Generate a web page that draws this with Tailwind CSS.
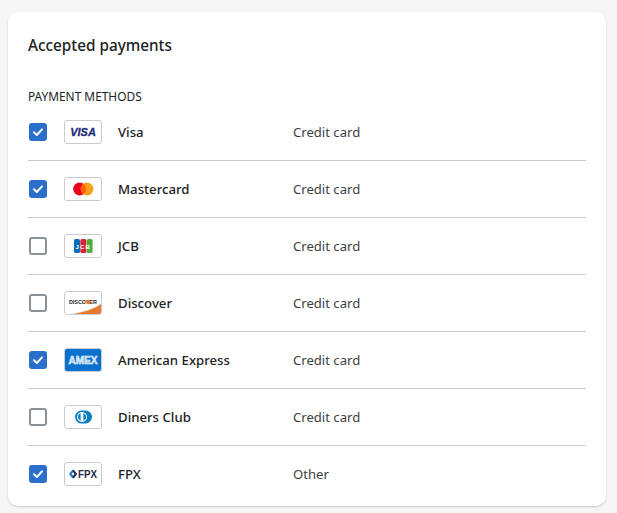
<!DOCTYPE html>
<html lang="en">
<head>
  <meta charset="UTF-8" />
  <title>Accepted payments</title>
  <script src="https://cdn.jsdelivr.net/npm/@tailwindcss/browser@4"></script>
</head>
<body class="h-[513px] overflow-hidden bg-[#f6f6f7] px-[8px] pt-[12px] font-['Noto_Sans','Open_Sans',sans-serif] text-[#202223]">

  <div class="w-[598px] h-[494px] rounded-[10px] bg-white px-[20px] shadow-[0_1px_2px_rgba(0,0,0,0.18)]">
    <h2 class="pt-[21px] h-[68px] text-[15.3px] leading-[24px] font-medium">Accepted payments</h2>
    <p class="mt-[8px] h-[16px] text-[11.9px] leading-[16px]">PAYMENT METHODS</p>

    <div class="w-[558px]">
      <!-- Visa -->
      <div class="flex items-center h-[56px] border-b border-[#c9cccf] box-content">
        <span class="ml-[1px] w-[18px] h-[18px] rounded-[3px] bg-[#2c6ecb] flex items-center justify-center">
          <svg width="12" height="12" viewBox="0 0 12 12" fill="none"><path d="M2 6.3 4.8 9 10 3.4" stroke="#fff" stroke-width="2" stroke-linecap="round" stroke-linejoin="round"/></svg>
        </span>
        <span class="ml-[17px] w-[38px] h-[24px] rounded-[3px] border border-[#c9cccf] bg-white flex items-center justify-center">
          <svg width="36" height="22" viewBox="0 0 36 22"><text x="18" y="15" text-anchor="middle" font-family="Liberation Sans" font-size="11" font-weight="700" font-style="italic" fill="#1e2a7b" stroke="#1e2a7b" stroke-width="0.3">VISA</text></svg>
        </span>
        <span class="ml-[16px] w-[175px] pt-[1px] text-[13.2px] font-medium">Visa</span>
        <span class="pt-[1px] text-[13.1px] text-[#3d4043]">Credit card</span>
      </div>

      <!-- Mastercard -->
      <div class="flex items-center h-[56px] border-b border-[#c9cccf] box-content">
        <span class="ml-[1px] w-[18px] h-[18px] rounded-[3px] bg-[#2c6ecb] flex items-center justify-center">
          <svg width="12" height="12" viewBox="0 0 12 12" fill="none"><path d="M2 6.3 4.8 9 10 3.4" stroke="#fff" stroke-width="2" stroke-linecap="round" stroke-linejoin="round"/></svg>
        </span>
        <span class="ml-[17px] w-[38px] h-[24px] rounded-[3px] border border-[#c9cccf] bg-white flex items-center justify-center">
          <svg width="36" height="22" viewBox="0 0 36 22"><circle cx="14.6" cy="11" r="6.4" fill="#eb001b"/><circle cx="22" cy="11" r="6.4" fill="#f79e1b"/><path d="M18.3 5.8a6.4 6.4 0 0 1 0 10.4 6.4 6.4 0 0 1 0-10.4z" fill="#ff5f00"/></svg>
        </span>
        <span class="ml-[16px] w-[175px] pt-[1px] text-[13.2px] font-medium">Mastercard</span>
        <span class="pt-[1px] text-[13.1px] text-[#3d4043]">Credit card</span>
      </div>

      <!-- JCB -->
      <div class="flex items-center h-[56px] border-b border-[#c9cccf] box-content">
        <span class="ml-[1px] w-[18px] h-[18px] rounded-[3px] border-2 border-[#8c9196] bg-white"></span>
        <span class="ml-[17px] w-[38px] h-[24px] rounded-[3px] border border-[#c9cccf] bg-white flex items-center justify-center">
          <svg width="36" height="22" viewBox="0 0 36 22">
            <rect x="9" y="4" width="6" height="14" rx="1.5" fill="#0b6cb8"/>
            <rect x="15.3" y="4" width="6" height="14" rx="1.5" fill="#d8213b"/>
            <rect x="21.6" y="4" width="6" height="14" rx="1.5" fill="#4caf3a"/>
            <text x="18.3" y="13.5" text-anchor="middle" font-family="Liberation Sans" font-size="6" font-weight="700" fill="#fff" letter-spacing="1.2">JCB</text>
          </svg>
        </span>
        <span class="ml-[16px] w-[175px] pt-[1px] text-[13.2px] font-medium">JCB</span>
        <span class="pt-[1px] text-[13.1px] text-[#3d4043]">Credit card</span>
      </div>

      <!-- Discover -->
      <div class="flex items-center h-[56px] border-b border-[#c9cccf] box-content">
        <span class="ml-[1px] w-[18px] h-[18px] rounded-[3px] border-2 border-[#8c9196] bg-white"></span>
        <span class="ml-[17px] w-[38px] h-[24px] rounded-[3px] border border-[#c9cccf] bg-white overflow-hidden flex">
          <svg width="36" height="22" viewBox="0 0 36 22">
            <path d="M8 22C19 20 29 17 36 12v10z" fill="#e9792f"/>
            <text x="4" y="12" font-family="Liberation Sans" font-size="6" font-weight="700" fill="#231f20" textLength="28" lengthAdjust="spacingAndGlyphs">DISCOVER</text>
            <circle cx="23.5" cy="10" r="2.2" fill="#e9792f"/>
          </svg>
        </span>
        <span class="ml-[16px] w-[175px] pt-[1px] text-[13.2px] font-medium">Discover</span>
        <span class="pt-[1px] text-[13.1px] text-[#3d4043]">Credit card</span>
      </div>

      <!-- American Express -->
      <div class="flex items-center h-[56px] border-b border-[#c9cccf] box-content">
        <span class="ml-[1px] w-[18px] h-[18px] rounded-[3px] bg-[#2c6ecb] flex items-center justify-center">
          <svg width="12" height="12" viewBox="0 0 12 12" fill="none"><path d="M2 6.3 4.8 9 10 3.4" stroke="#fff" stroke-width="2" stroke-linecap="round" stroke-linejoin="round"/></svg>
        </span>
        <span class="ml-[17px] w-[38px] h-[24px] rounded-[3px] border border-[#c9cccf] bg-[#0a70ce] flex items-center justify-center">
          <svg width="36" height="22" viewBox="0 0 36 22"><text x="3.5" y="14.5" font-family="Liberation Sans" font-size="10" font-weight="700" fill="#a9d0f0" stroke="#fff" stroke-width="0.5" textLength="29" lengthAdjust="spacingAndGlyphs">AMEX</text></svg>
        </span>
        <span class="ml-[16px] w-[175px] pt-[1px] text-[13.2px] font-medium">American Express</span>
        <span class="pt-[1px] text-[13.1px] text-[#3d4043]">Credit card</span>
      </div>

      <!-- Diners Club -->
      <div class="flex items-center h-[56px] border-b border-[#c9cccf] box-content">
        <span class="ml-[1px] w-[18px] h-[18px] rounded-[3px] border-2 border-[#8c9196] bg-white"></span>
        <span class="ml-[17px] w-[38px] h-[24px] rounded-[3px] border border-[#c9cccf] bg-white flex items-center justify-center">
          <svg width="36" height="22" viewBox="0 0 36 22">
            <rect x="10" y="4.5" width="17" height="13" rx="6.5" fill="#0e7dc2"/>
            <circle cx="17" cy="11" r="5" fill="#fff"/>
            <path d="M15.6 7.2v7.6a4 4 0 0 1 0-7.6z" fill="#0e7dc2"/>
            <path d="M18.4 7.2v7.6a4 4 0 0 0 0-7.6z" fill="#0e7dc2"/>
          </svg>
        </span>
        <span class="ml-[16px] w-[175px] pt-[1px] text-[13.2px] font-medium">Diners Club</span>
        <span class="pt-[1px] text-[13.1px] text-[#3d4043]">Credit card</span>
      </div>

      <!-- FPX -->
      <div class="flex items-center h-[56px]">
        <span class="ml-[1px] w-[18px] h-[18px] rounded-[3px] bg-[#2c6ecb] flex items-center justify-center">
          <svg width="12" height="12" viewBox="0 0 12 12" fill="none"><path d="M2 6.3 4.8 9 10 3.4" stroke="#fff" stroke-width="2" stroke-linecap="round" stroke-linejoin="round"/></svg>
        </span>
        <span class="ml-[17px] w-[38px] h-[24px] rounded-[3px] border border-[#c9cccf] bg-white flex items-center justify-center">
          <svg width="36" height="22" viewBox="0 0 36 22">
            <path d="M7.5 6.5 4 11l3.5 4.5 1.3-1.7L6.6 11l2.2-2.8z" fill="#1c7fc4"/>
            <path d="M8.7 6.5 12.2 11l-3.5 4.5-1.3-1.7L9.6 11 7.4 8.2z" fill="#1b2a5b"/>
            <text x="13" y="14.7" font-family="Liberation Sans" font-size="10" font-weight="700" fill="#1f2a44" textLength="19" lengthAdjust="spacingAndGlyphs">FPX</text>
          </svg>
        </span>
        <span class="ml-[16px] w-[175px] pt-[1px] text-[13.2px] font-medium">FPX</span>
        <span class="pt-[1px] text-[13.1px] text-[#3d4043]">Other</span>
      </div>
    </div>
  </div>

</body>
</html>
